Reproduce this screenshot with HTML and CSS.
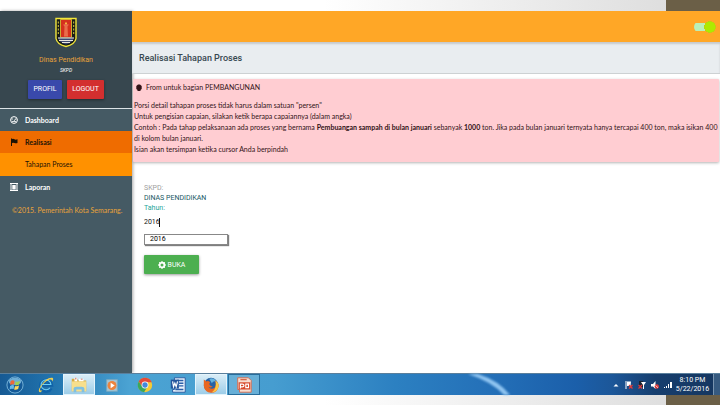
FILE: index.html
```html
<!DOCTYPE html>
<html lang="id">
<head>
<meta charset="utf-8">
<meta name="viewport" content="width=device-width, initial-scale=1">
<title>Realisasi Tahapan Proses</title>
<link rel="stylesheet" href="styles.css">
</head>
<body>
<div class="app">
  <aside class="sidebar">
    <div class="profile">
      <svg class="crest" viewBox="0 0 22 30" aria-hidden="true">
        <path d="M1 1H21V21Q20 27 11 29Q2 27 1 21Z" fill="#171b16" stroke="#f2e63a" stroke-width="1.4"/>
        <path d="M5.500 2H16.500V20H5.500Z" fill="#d5301d" stroke="#f2e63a" stroke-width=".7"/>
        <path d="M11 4L12.500 7H14L12.500 9L13 19H9L9.500 9L8 7H9.500Z" fill="#e96d4b"/>
        <path d="M11 4.500L12 6.500H10Z" fill="#f7d63b"/>
        <path d="M3.300 4V18M18.700 4V18" stroke="#d8c83a" stroke-width="1" stroke-dasharray="2 1.500"/>
        <path d="M3 20H19Q18 25 11 27Q4 25 3 20Z" fill="#3b4770"/>
        <path d="M3 20.500H19M4 23H18M7 25H15" stroke="#e8e4dc" stroke-width="1"/>
      </svg>
      <div class="profile-name">Dinas Pendidikan</div>
      <div class="profile-role">SKPD</div>
      <div class="profile-actions">
        <button class="btn btn-profile" type="button">PROFIL</button>
        <button class="btn btn-logout" type="button">LOGOUT</button>
      </div>
    </div>
    <nav class="menu">
      <a class="menu-item" href="#">
        <svg class="menu-icon" viewBox="0 0 8 8" aria-hidden="true"><circle cx="4" cy="4" r="3.400" fill="none" stroke="#fff"/><path d="M1.500 3H3M5 3H6.500M2 5.500H6M4 5L5.500 3" stroke="#fff" stroke-width=".8"/></svg>
        Dashboard</a>
      <a class="menu-item menu-item-active" href="#">
        <svg class="menu-icon" viewBox="0 0 8 8" aria-hidden="true"><path d="M1 .5H2V8H1ZM2 1Q3.500 .5 4.500 1.300T7.500 1.300V5Q6 5.700 4.500 5T2 5Z" fill="#1c1205"/></svg>
        Realisasi</a>
      <a class="menu-item menu-item-sub" href="#">Tahapan Proses</a>
      <a class="menu-item" href="#">
        <svg class="menu-icon" viewBox="0 0 8 8" aria-hidden="true"><path d="M0 .5H8M0 7.500H8M1 1V7M7 1V7" stroke="#fff" stroke-width="1"/><path d="M2.300 2H5.700V6.500H2.300Z" fill="#fff"/></svg>
        Laporan</a>
    </nav>
    <p class="copyright">©2015. Pemerintah Kota Semarang.</p>
  </aside>
  <div class="content">
    <header class="topbar">
      <label class="switch"><input type="checkbox" checked aria-label="Menu"></label>
    </header>
    <h1 class="page-title">Realisasi Tahapan Proses</h1>
    <main class="main">
      <section class="notice">
        <div class="notice-title">
          <svg class="notice-icon" viewBox="0 0 6 8" aria-hidden="true"><path d="M2 .5H4L5.700 2V5L4.500 6V7H1.500V6L.3 5V2Z" fill="#321317"/></svg>
          From untuk bagian PEMBANGUNAN</div>
        <p>Porsi detail tahapan proses tidak harus dalam satuan "persen"</p>
        <p>Untuk pengisian capaian, silakan ketik berapa capaiannya (dalam angka)</p>
        <p>Contoh : Pada tahap pelaksanaan ada proses yang bernama <b>Pembuangan sampah di bulan januari</b> sebanyak <b>1000</b> ton. Jika pada bulan januari ternyata hanya tercapai 400 ton, maka isikan 400 di kolom bulan januari.</p>
        <p>Isian akan tersimpan ketika cursor Anda berpindah</p>
      </section>
      <form class="form">
        <span class="label-muted">SKPD:</span>
        <span class="unit">DINAS PENDIDIKAN</span>
        <label class="label-year" for="year">Tahun:</label>
        <div class="year-field">
          <input id="year" class="year-input" type="text" value="2016" size="4" autocomplete="off"><span class="caret"></span>
        </div>
        <button class="suggestion" type="button">2016</button>
        <button class="btn btn-open" type="button">
          <svg class="open-icon" viewBox="0 0 8 8" aria-hidden="true"><circle cx="4" cy="4" r="2.400" fill="none" stroke="#fff" stroke-width="1.800"/><path d="M4 0V1.500M4 6.500V8M0 4H1.500M6.500 4H8M1.200 1.200L2 2M6 6L6.800 6.800M6.800 1.200L6 2M2 6L1.200 6.800" stroke="#fff" stroke-width="1"/></svg>
          BUKA</button>
      </form>
    </main>
  </div>
</div>
<footer class="taskbar">
  <svg class="streak" viewBox="0 0 48 22" preserveAspectRatio="none" aria-hidden="true"><path d="M0 0H10Q31 7 42 22H36Q24 8 0 0Z" fill="#90c5f1"/></svg>
  <button class="task task-start" type="button" aria-label="Start">
    <svg viewBox="0 0 20 20"><circle cx="10" cy="10" r="9" fill="#145a98" stroke="#7eb9dc"/><ellipse cx="10" cy="6" rx="7" ry="4" fill="#6eaed5"/><path d="M5 6Q7 4 9.500 5.500L9 9.500Q7 8.500 4.500 10Z" fill="#ef6739"/><path d="M10.500 6Q13 7 15.500 5.500L14.500 9.500Q12 11 10 10Z" fill="#9ed052"/><path d="M4.500 11Q7 9.500 9 10.500L8.500 14.500Q6 13.500 4 15Z" fill="#67bbea"/><path d="M10 11Q12 12 14.500 10.500L13.500 14.500Q11 16 9 15Z" fill="#ffd65a"/></svg>
  </button>
  <button class="task" type="button" aria-label="Internet Explorer">
    <svg viewBox="0 0 20 20"><path d="M15.500 13.500A6 6 0 1 1 16 10H6" fill="none" stroke="#0f62a8" stroke-width="3.800"/><path d="M14.500 13A5.500 5.500 0 1 1 15.500 9.500H6" fill="none" stroke="#6dcff5" stroke-width="1.200"/><path d="M4 18Q0 18 4 11Q11 1 17 2Q19 3 17 6Q17 3 14 4Q8 6 4 13Q2 17 6 16" fill="#efcf52"/></svg>
  </button>
  <button class="task task-open" type="button" aria-label="Explorer">
    <svg viewBox="0 0 20 20"><path d="M2 3H8L9 5H18V17H2Z" fill="#d8aa42"/><path d="M5 2H8V6H5ZM10 3H15V6H10Z" fill="#fff"/><path d="M6 2H7V4H6ZM12 3H14V4H12Z" fill="#c64c36"/><path d="M2 6H18V17H2Z" fill="#f7df8c"/><path d="M4 18V14Q4 12 7 12H13Q16 12 16 14V18H13V15H7V18Z" fill="#7fc1e2"/></svg>
  </button>
  <button class="task" type="button" aria-label="Media Player">
    <svg viewBox="0 0 20 20"><path d="M4 4H16V17H4Z" fill="#a6c7d6" stroke="#78a8c0"/><circle cx="10" cy="10.500" r="5" fill="#ec843e"/><path d="M8.500 7.500L13 10.500L8.500 13.500Z" fill="#fff"/></svg>
  </button>
  <button class="task" type="button" aria-label="Chrome">
    <svg viewBox="0 0 20 20"><circle cx="10" cy="10" r="8" fill="#f5cb35"/><path d="M3 6A8 8 0 0 1 17.500 7H10L7 12Z" fill="#e34b3b"/><path d="M3 6L7 12L12 13L9 18A8 8 0 0 1 3 6Z" fill="#3aa75b"/><circle cx="10" cy="10" r="3.800" fill="#fff"/><circle cx="10" cy="10" r="3" fill="#4389db"/></svg>
  </button>
  <button class="task" type="button" aria-label="Word">
    <svg viewBox="0 0 20 20"><path d="M6 2H18V18H4V15H6Z" fill="#e9f2fc" stroke="#24559c"/><path d="M9 5H16M11 8H16M11 11H16M7 15H16" stroke="#2b5fa8" stroke-width="1.500"/><path d="M2 4H11V14H2Z" fill="#24559c"/><path d="M4 6L5 12L6.500 8L8 12L9.500 6" fill="none" stroke="#fff" stroke-width="1.300"/></svg>
  </button>
  <button class="task task-open" type="button" aria-label="Firefox">
    <svg viewBox="0 0 20 20"><circle cx="10" cy="10" r="8" fill="#2762a5"/><path d="M8 3Q13 1 16 6Q12 5 11 8Z" fill="#65b3df"/><path d="M2 4L5 6Q7 5 9 7L8 9Q9 12 12 11Q10 14 7 12Q10 16 14 13Q16 10 15 5Q20 9 18 13Q16 19 10 18.500Q3 18 2 11Z" fill="#e96722"/><path d="M15 5Q20 9 18 13Q16 18 11 18Q17 14 15 5Z" fill="#fac844"/></svg>
  </button>
  <button class="task task-running" type="button" aria-label="PowerPoint">
    <svg viewBox="0 0 20 20"><path d="M3 2H15L18 5V18H5V15H3Z" fill="#f7ded2" stroke="#d7694a"/><path d="M4 7H17V15H4Z" fill="#d7492a"/><path d="M6 14V9H8Q10 9 10 10.500T8 12H6M12 9H15V13H12Z" fill="none" stroke="#fff" stroke-width="1.300"/><path d="M6 4H13" stroke="#d7694a" stroke-width="1.500"/></svg>
  </button>
  <div class="tray">
    <svg viewBox="0 0 8 8" aria-hidden="true"><path d="M1.500 5.500L4 3L6.500 5.500Z" fill="#fff"/></svg>
    <svg viewBox="0 0 8 8" aria-hidden="true"><path d="M.5 0H1.500V8H.5ZM2 .5H6L5.500 5H2Z" fill="#fff"/><path d="M4 4L7.500 7.500M7.500 4L4 7.500" stroke="#dc3b3b" stroke-width="1.300"/></svg>
    <svg viewBox="0 0 8 8" aria-hidden="true"><path d="M1 0H5V6H1Z" fill="#182333"/><path d="M3 1H8L6 4V8H5V4Z" fill="#fff"/><path d="M.5 4L4 7.500M4 4L.5 7.500" stroke="#dc3b3b" stroke-width="1.200"/></svg>
    <svg viewBox="0 0 8 8" aria-hidden="true"><path d="M0 3H2L4.500 0V8L2 5.500H0Z" fill="#fff"/><circle cx="5.800" cy="5.500" r="2.200" fill="#dc3b3b"/><path d="M4.500 4.500L7 6.800" stroke="#fff" stroke-width=".7"/></svg>
    <svg viewBox="0 0 8 8" aria-hidden="true"><path d="M0 6H1V7H0ZM2 5H3V7H2ZM4 3H5V7H4ZM6 1H8V7H6Z" fill="#fff"/></svg>
  </div>
  <div class="clock"><span>8:10 PM</span><span>5/22/2016</span></div>
  <div class="show-desktop"></div>
</footer>
</body>
</html>
```

FILE: styles.css
```css
* {
  box-sizing: border-box;
}

body {
  margin: 0;
  min-height: 100vh;
  padding: 11px 0 10px;
  display: flex;
  flex-direction: column;
  font: 7px/11px Roboto, sans-serif;
  color: #222;
  background:
    linear-gradient(#6b5f47, #6b5f47) right / 54px 100% no-repeat,
    linear-gradient(90deg, #fff 45%, #dedede 93%);
}

button,
input {
  font: inherit;
}

p {
  margin: 0;
}

.app {
  flex: 1;
  display: flex;
  background: #fff;
}

.sidebar {
  flex: 0 0 132px;
  background: #455a64;
  box-shadow: 1px 0 3px rgba(0, 0, 0, .35);
}

.profile {
  height: 98px;
  padding-top: 6px;
  display: flex;
  flex-direction: column;
  align-items: center;
  background: #37474f;
  border-bottom: 1px solid #dce3e6;
}

.crest {
  width: 22px;
  height: 31px;
}

.profile-name {
  margin-top: 7px;
  color: #e9a33a;
}

.profile-role {
  font-size: 5px;
  line-height: 9px;
  font-style: italic;
  color: #fff;
}

.profile-actions {
  margin-top: 5px;
  display: flex;
  gap: 5px;
}

.btn {
  height: 19px;
  padding: 0;
  border: 0;
  border-radius: 1px;
  color: #fff;
  box-shadow: 0 1px 3px rgba(0, 0, 0, .4);
}

.btn-profile {
  width: 34px;
  background: #3949ab;
}

.btn-logout {
  width: 37px;
  background: #d32f2f;
}

.menu-item {
  height: 22px;
  padding-left: 10px;
  display: flex;
  align-items: center;
  gap: 7px;
  font-family: Lato, sans-serif;
  font-weight: 700;
  color: #fff;
  text-decoration: none;
}

.menu-icon {
  width: 8px;
  height: 8px;
}

.menu-item-active {
  background: #ef6c00;
  color: #1c1205;
}

.menu-item-sub {
  height: 23px;
  padding-left: 25px;
  background: #ff9100;
  font-weight: 400;
  color: #1c1205;
}

.copyright {
  margin-top: 7px;
  padding-left: 12px;
  font-family: Lato, sans-serif;
  color: #e9a33a;
}

.content {
  flex: 1;
  min-width: 0;
}

.topbar {
  height: 31px;
  padding-right: 4px;
  display: flex;
  align-items: center;
  justify-content: flex-end;
  background: #ffa726;
}

.switch {
  display: flex;
}

.switch input {
  appearance: none;
  width: 22px;
  height: 12px;
  margin: 0;
  background:
    radial-gradient(circle at 16px 6px, #aeea00 5px, #c4c515 6px, transparent 6px),
    linear-gradient(#b9efb8, #b9efb8) 0 50% / 15px 8px no-repeat;
  border-radius: 6px;
}

.page-title {
  margin: 0;
  height: 32px;
  padding-left: 7px;
  font-size: 9px;
  line-height: 32px;
  font-weight: 500;
  color: #37474f;
  background: #e9edf0;
  border-bottom: 1px solid #cdd1d3;
  box-shadow: inset 0 2px 2px rgba(0, 0, 0, .15);
}

.main {
  padding: 5px 1px 0;
}

.notice {
  padding: 3px 0 7px 1px;
  font-family: Lato, sans-serif;
  background: #ffcdd2;
  color: #321317;
  border-radius: 1px;
  box-shadow: 0 1px 3px rgba(0, 0, 0, .3);
}

.notice-title {
  margin-bottom: 7px;
  padding-left: 2px;
  display: flex;
  align-items: center;
  gap: 4px;
}

.notice-icon {
  width: 6px;
  height: 8px;
}

.form {
  padding: 21px 11px 0;
  display: flex;
  flex-direction: column;
  align-items: flex-start;
  line-height: 10px;
}

.label-muted {
  color: #9e9e9e;
}

.unit {
  color: #155763;
}

.label-year {
  color: #26a69a;
}

.year-field {
  margin-top: 4px;
  display: flex;
  align-items: center;
}

.year-input {
  width: 15px;
  height: 10px;
  padding: 0;
  border: 0;
  background: none;
  color: #111;
}

.caret {
  width: 1px;
  height: 9px;
  background: #111;
}

.suggestion {
  margin-top: 7px;
  width: 84px;
  height: 11px;
  padding: 0 5px;
  border: 1px solid #888;
  background: #fff;
  color: #000;
  text-align: left;
  line-height: 9px;
  box-shadow: 1px 1px 1px rgba(0, 0, 0, .5);
}

.btn-open {
  margin-top: 10px;
  width: 55px;
  display: flex;
  align-items: center;
  justify-content: center;
  gap: 2px;
  background: #4caf50;
}

.open-icon {
  width: 8px;
  height: 8px;
}

.taskbar {
  position: relative;
  height: 22px;
  display: flex;
  align-items: center;
  background: linear-gradient(90deg, #165a94 0, #2376b0 8%, #4ba3d3 18%, #469dd0 38%, #2c80c1 55%, #2470b8 68%, #1b5faa 80%, #1c5799 85%, #163e6e 91%, #15365f 100%);
  border-top: 1px solid #5a7f9c;
}

.streak {
  position: absolute;
  left: 65%;
  top: 0;
  width: 48px;
  height: 100%;
  filter: blur(1px);
}

.task {
  flex: 0 0 32px;
  height: 21px;
  margin-right: 1px;
  padding: 0;
  display: flex;
  align-items: center;
  justify-content: center;
  border: 0;
  background: none;
}

.task-start {
  flex-basis: 29px;
}

.task svg {
  width: 18px;
  height: 18px;
}

.task-open {
  background: linear-gradient(#d9edf7, #9dcde8);
  border: 1px solid #e4f4fc;
}

.task-running {
  background: #67afd7;
  border: 1px solid #286d9c;
}

.tray {
  margin-left: auto;
  display: flex;
  gap: 5px;
}

.tray svg {
  width: 8px;
  height: 8px;
}

.clock {
  width: 41px;
  display: flex;
  flex-direction: column;
  align-items: center;
  line-height: 9px;
  color: #fff;
}

.show-desktop {
  width: 7px;
  height: 21px;
  border-left: 1px solid #7893ae;
  background: #365a80;
}
```
